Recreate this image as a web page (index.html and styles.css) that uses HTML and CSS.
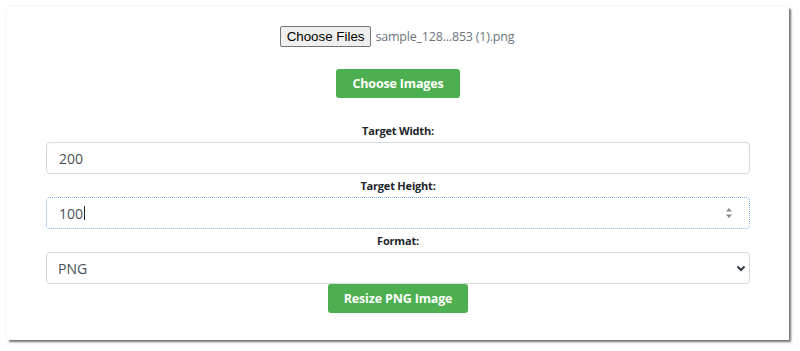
FILE: index.html
```html
<!DOCTYPE html>
<html lang="en">
<head>
    <meta charset="UTF-8">
    <meta name="viewport" content="width=device-width, initial-scale=1.0">
    <title>PNG Resizer</title>
    <link rel="stylesheet" href="styles.css">
</head>
<body>
    <div class="card">
        <!-- file picker -->
        <div class="file-row">
            <button class="file-btn" type="button">Choose Files</button>
            <span class="file-name">sample_128...853 (1).png</span>
        </div>
        <button class="btn btn-pick" type="button">Choose Images</button>

        <!-- sizes -->
        <label class="label first" for="w">Target Width:</label>
        <input class="field" id="w" type="text" value="200">

        <label class="label">Target Height:</label>
        <div class="field is-focus">
            <span>100</span><span class="caret"></span>
            <svg class="spin" width="8" height="12" viewBox="0 0 8 12">
                <path d="M1 4.5 L4 1 L7 4.5 Z" fill="#8a8a8a"/>
                <path d="M1 7.5 L4 11 L7 7.5 Z" fill="#8a8a8a"/>
            </svg>
        </div>

        <label class="label" for="fmt">Format:</label>
        <div class="select-wrap">
            <select class="field select" id="fmt">
                <option>PNG</option>
                <option>JPEG</option>
                <option>WEBP</option>
            </select>
            <svg class="chev" width="10" height="7" viewBox="0 0 10 7">
                <path d="M1.5 1.5 L5 5 L8.5 1.5" fill="none" stroke="#343a40" stroke-width="2"/>
            </svg>
        </div>

        <button class="btn btn-resize" type="button">Resize PNG Image</button>
    </div>
</body>
</html>
```

FILE: styles.css
```css
* {
    margin: 0;
    padding: 0;
    box-sizing: border-box;
}

html, body {
    min-height: 100%;
}

body {
    min-height: 100vh;
    padding: 7px 0 11px 7px;
    background: #fff;
    font-family: "Open Sans", "Segoe UI", sans-serif;
    color: #212529;
}

.card {
    width: 782px;
    padding: 19px 39px 27px;
    background: #fff;
    display: flex;
    flex-direction: column;
    align-items: center;
    box-shadow: 2px 2px 2px rgba(0, 0, 0, 0.55), 0 0 3px rgba(0, 0, 0, 0.08);
}

/* file picker */
.file-row {
    display: flex;
    align-items: center;
    gap: 4px;
    height: 20px;
    margin-left: -2px;
}

.file-btn {
    font-family: "Liberation Sans", Arial, sans-serif;
    font-size: 13.33px;
    height: 21px;
    padding: 0 6px;
    background: #efefef;
    color: #000;
    border: 1px solid #767676;
    border-radius: 2px;
}

.file-name {
    font-size: 12.5px;
    color: #6c757d;
    letter-spacing: -0.2px;
}

/* buttons */
.btn {
    height: 29px;
    padding: 0 16px;
    background: #4caf50;
    color: #fff;
    border: none;
    border-radius: 3px;
    font-family: "Open Sans", sans-serif;
    font-weight: 700;
    font-size: 12.5px;
    letter-spacing: -0.15px;
}

.btn-pick {
    margin-top: 23px;
}

/* form */
.label {
    display: block;
    margin-top: 2px;
    margin-bottom: 1px;
    font-size: 11px;
    font-weight: 700;
    letter-spacing: -0.2px;
    line-height: 20px;
}

.label.first {
    margin-top: 23px;
}

.field {
    width: 100%;
    height: 32px;
    padding: 0 12px;
    border: 1px solid #d6d9dc;
    border-radius: 4px;
    background: #fff;
    font-family: "Open Sans", sans-serif;
    font-size: 14px;
    color: #495057;
    outline: none;
}

.is-focus {
    position: relative;
    display: flex;
    align-items: center;
    border: 1px dotted #7fb0e6;
}

.caret {
    display: inline-block;
    width: 1px;
    height: 14px;
    margin-left: 1px;
    background: #222;
}

.spin {
    position: absolute;
    right: 16px;
    top: 9px;
}

.select-wrap {
    position: relative;
    width: 100%;
}

.select {
    display: block;
    appearance: none;
    -webkit-appearance: none;
    padding-left: 11px;
}

.chev {
    position: absolute;
    right: 4px;
    top: 13px;
}

.btn-resize {
    margin-top: 0;
}
```
